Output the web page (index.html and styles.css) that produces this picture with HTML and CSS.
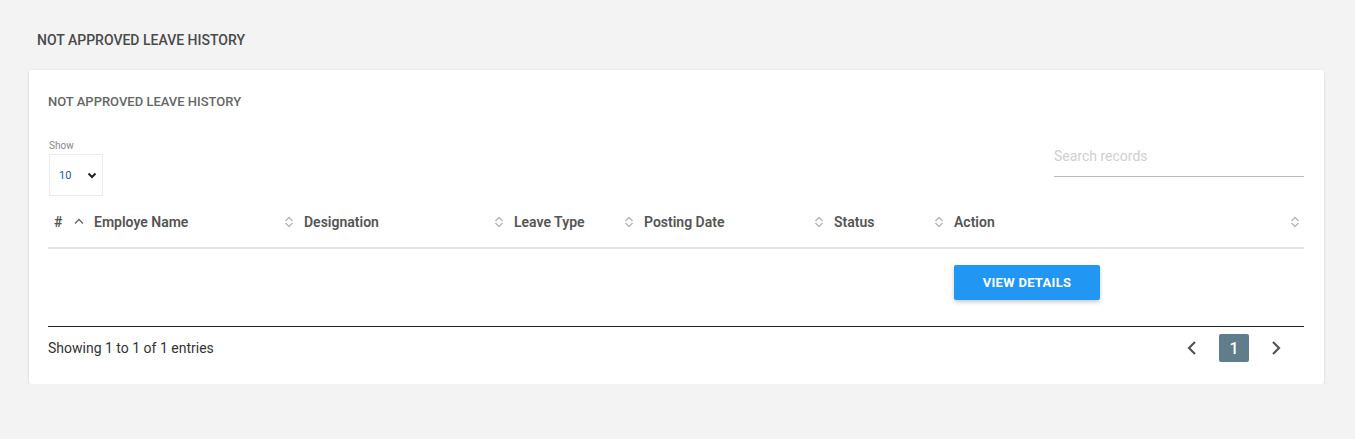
FILE: index.html
```html
<!DOCTYPE html>
<html>
<head>
<meta charset="utf-8">
<link rel="stylesheet" href="styles.css">
</head>
<body>
<div class="page">
  <h1 class="page-title">NOT APPROVED LEAVE HISTORY</h1>
  <div class="card">
    <h2 class="card-title">NOT APPROVED LEAVE HISTORY</h2>
    <div class="controls">
      <div class="show">
        <label class="show-label">Show</label>
        <div class="select">
          <span class="select-val">10</span>
          <svg class="select-caret" width="10" height="7" viewBox="0 0 10 7"><path d="M1.5 1.5 L5 5 L8.5 1.5" fill="none" stroke="#222" stroke-width="2"/></svg>
        </div>
      </div>
      <div class="search">
        <span class="search-ph">Search records</span>
      </div>
    </div>
    <div class="table">
      <div class="thead">
        <div class="th"><span>#</span><svg class="sort" width="10" height="12" viewBox="0 0 10 12"><path d="M1 7.5 L5 3.5 L9 7.5" fill="none" stroke="#666" stroke-width="1.4"/></svg></div>
        <div class="th"><span>Employe Name</span><svg class="sort" width="10" height="12" viewBox="0 0 10 12"><path d="M1.5 5 L5 1.5 L8.5 5 M1.5 7 L5 10.5 L8.5 7" fill="none" stroke="#b5b5b5" stroke-width="1.3"/></svg></div>
        <div class="th"><span>Designation</span><svg class="sort" width="10" height="12" viewBox="0 0 10 12"><path d="M1.5 5 L5 1.5 L8.5 5 M1.5 7 L5 10.5 L8.5 7" fill="none" stroke="#b5b5b5" stroke-width="1.3"/></svg></div>
        <div class="th"><span>Leave Type</span><svg class="sort" width="10" height="12" viewBox="0 0 10 12"><path d="M1.5 5 L5 1.5 L8.5 5 M1.5 7 L5 10.5 L8.5 7" fill="none" stroke="#b5b5b5" stroke-width="1.3"/></svg></div>
        <div class="th"><span>Posting Date</span><svg class="sort" width="10" height="12" viewBox="0 0 10 12"><path d="M1.5 5 L5 1.5 L8.5 5 M1.5 7 L5 10.5 L8.5 7" fill="none" stroke="#b5b5b5" stroke-width="1.3"/></svg></div>
        <div class="th"><span>Status</span><svg class="sort" width="10" height="12" viewBox="0 0 10 12"><path d="M1.5 5 L5 1.5 L8.5 5 M1.5 7 L5 10.5 L8.5 7" fill="none" stroke="#b5b5b5" stroke-width="1.3"/></svg></div>
        <div class="th"><span>Action</span><svg class="sort" width="10" height="12" viewBox="0 0 10 12"><path d="M1.5 5 L5 1.5 L8.5 5 M1.5 7 L5 10.5 L8.5 7" fill="none" stroke="#b5b5b5" stroke-width="1.3"/></svg></div>
      </div>
      <div class="tr">
        <div class="td"></div>
        <div class="td"></div>
        <div class="td"></div>
        <div class="td"></div>
        <div class="td"></div>
        <div class="td"></div>
        <div class="td td-action"><button class="btn">VIEW DETAILS</button></div>
      </div>
    </div>
    <div class="footer">
      <span class="info">Showing 1 to 1 of 1 entries</span>
      <div class="pager">
        <svg class="pg-arrow" width="12" height="16" viewBox="0 0 12 16"><path d="M9 2 L3 8 L9 14" fill="none" stroke="#555" stroke-width="2.2"/></svg>
        <span class="pg-num">1</span>
        <svg class="pg-arrow" width="12" height="16" viewBox="0 0 12 16"><path d="M3 2 L9 8 L3 14" fill="none" stroke="#555" stroke-width="2.2"/></svg>
      </div>
    </div>
  </div>
</div>
</body>
</html>
```
FILE: styles.css
```css
* { box-sizing: border-box; }
html, body { margin: 0; padding: 0; }
body {
  background: #f3f3f3;
  font-family: Roboto, "Liberation Sans", Arial, sans-serif;
  color: #333;
}
.page {
  padding: 32px 31px 0 29px;
}
.page-title {
  margin: 0 0 21px 8px;
  font-size: 14px;
  font-weight: 500;
  color: #4a4a4a;
  line-height: 17px;
}
.card {
  background: #fff;
  border-radius: 2px;
  box-shadow: 0 1px 3px rgba(0,0,0,0.14);
  padding: 24px 20px 15px 19px;
}
.card-title {
  margin: 0;
  font-size: 13px;
  font-weight: 500;
  color: #666;
  line-height: 16px;
}
.controls {
  display: flex;
  justify-content: space-between;
  margin-top: 30px;
}
.show { display: flex; flex-direction: column; }
.show-label {
  font-size: 10px;
  color: #888;
  line-height: 12px;
  margin-left: 1px;
}
.select {
  margin-top: 2px;
  margin-left: 1px;
  width: 54px;
  height: 42px;
  border: 1px solid #ececec;
  display: flex;
  align-items: center;
  padding: 0 0 0 9px;
}
.select-val {
  font-size: 11px;
  color: #1a5ca0;
  width: 28px;
}
.select-caret { display: block; }
.search {
  width: 250px;
  height: 37px;
  border-bottom: 1px solid #bbb;
  padding-top: 7px;
}
.search-ph {
  font-size: 14px;
  color: #cfcfcf;
  line-height: 18px;
  display: block;
}
.table { margin-top: 3px; }
.thead, .tr {
  display: grid;
  grid-template-columns: 40px 210px 210px 130px 190px 120px 356px;
}
.thead { border-bottom: 2px solid #e3e3e3; }
.th {
  display: flex;
  align-items: center;
  justify-content: space-between;
  height: 48px;
  padding: 0 4px 2px 6px;
  font-size: 14px;
  font-weight: 600;
  color: #555;
}
.th .sort { display: block; }
.tr {
  border-bottom: 1px solid #222;
  height: 78px;
}
.td-action { padding: 16px 0 0 6px; }
.btn {
  width: 146px;
  height: 35px;
  border: none;
  border-radius: 2px;
  background: #2196f3;
  color: #fff;
  font-family: Roboto, "Liberation Sans", Arial, sans-serif;
  font-size: 13px;
  font-weight: 700;
  letter-spacing: 0.3px;
  box-shadow: 0 2px 4px rgba(0,0,0,0.22);
  padding: 0;
}
.footer {
  display: flex;
  justify-content: space-between;
  align-items: center;
  height: 42px;
}
.info {
  font-size: 14px;
  color: #333;
}
.pager {
  display: flex;
  align-items: center;
  margin-right: 22px;
}
.pg-arrow { display: block; }
.pg-num {
  display: flex;
  align-items: center;
  justify-content: center;
  width: 30px;
  height: 28px;
  background: #607d8b;
  color: #fff;
  font-size: 16px;
  font-weight: 500;
  border-radius: 2px;
  margin: 0 21px 0 21px;
}
```
